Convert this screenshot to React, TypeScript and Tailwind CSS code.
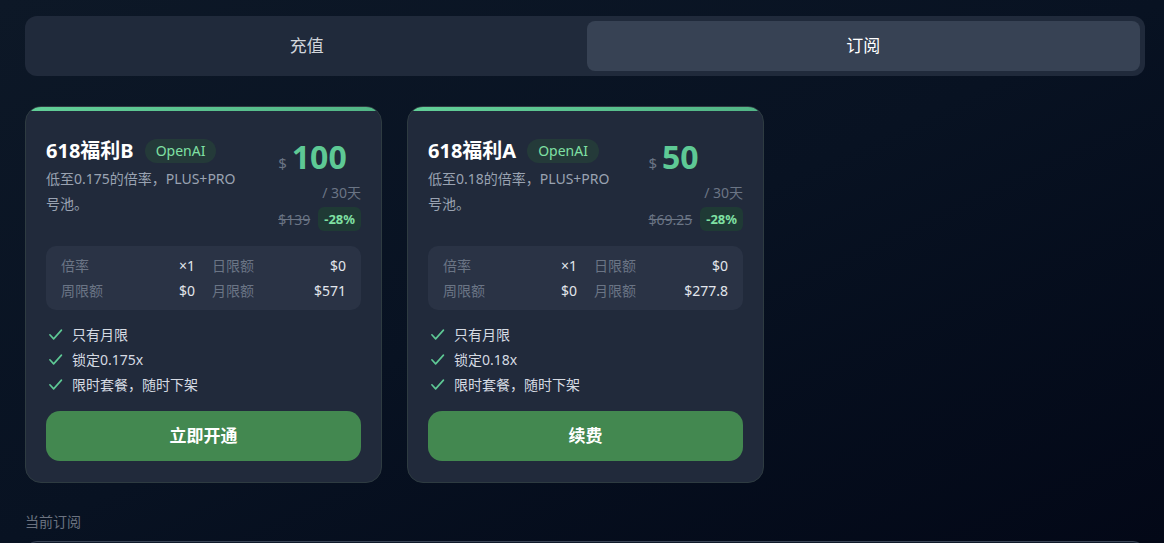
import React from "react";

const font = { fontFamily: '"Noto Sans", "Noto Sans CJK SC", sans-serif' };

function Check() {
  return (
    <svg width="15" height="15" viewBox="0 0 24 24" fill="none" stroke="#5ec995" strokeWidth="2.6" strokeLinecap="round" strokeLinejoin="round">
      <path d="M3 12.5l6 6.5L21.5 5" />
    </svg>
  );
}

type Plan = {
  title: string;
  desc: string;
  price: string;
  orig: string;
  dayLimit: string;
  weekLimit: string;
  monthLimit: string;
  feature: string;
  button: string;
};

const plans: Plan[] = [
  {
    title: "618福利B",
    desc: "低至0.175的倍率，PLUS+PRO号池。",
    price: "100",
    orig: "$139",
    dayLimit: "$0",
    weekLimit: "$0",
    monthLimit: "$571",
    feature: "锁定0.175x",
    button: "立即开通",
  },
  {
    title: "618福利A",
    desc: "低至0.18的倍率，PLUS+PRO号池。",
    price: "50",
    orig: "$69.25",
    dayLimit: "$0",
    weekLimit: "$0",
    monthLimit: "$277.8",
    feature: "锁定0.18x",
    button: "续费",
  },
];

function Card({ p }: { p: Plan }) {
  return (
    <div className="relative w-[357px] rounded-[16px] border border-[#2e3b41] bg-[#212a3b] overflow-hidden">
      <div className="h-[4px] bg-gradient-to-r from-[#62cf98] to-[#52b586]" />
      <div className="px-5 pt-[26px] pb-[21px]">
        <div className="flex gap-[18px]">
          <div className="flex-1 min-w-0">
            <div className="flex items-center gap-[11px] h-[28px]">
              <span className="text-[20px] font-bold text-white leading-[28px]">{p.title}</span>
              <span className="h-[24px] px-[11px] rounded-full bg-[#243a39] text-[#7fe0a3] text-[14px] leading-[24px]">OpenAI</span>
            </div>
            <div className="mt-[1px] max-w-[192px] text-[14px] leading-[25px] text-[#9aa3b2]">{p.desc}</div>
          </div>
          <div className="flex flex-col">
            <div className="flex items-baseline gap-[5px] h-[40px] self-start">
              <span className="text-[15px] text-[#6b7585]">$</span>
              <span className="text-[32px] font-bold text-[#5ec995] leading-[40px]">{p.price}</span>
            </div>
            <div className="self-end text-[14px] leading-[20px] mt-[6px] text-[#6b7585]">/ 30天</div>
            <div className="flex items-center gap-[8px] mt-[4px]">
              <span className="text-[14px] text-[#6b7585] line-through">{p.orig}</span>
              <span className="h-[24px] px-[6px] rounded-[6px] bg-[#1f3a35] text-[#7fe0a3] text-[13px] font-bold leading-[24px]">-28%</span>
            </div>
          </div>
        </div>
        <div className="mt-[15px] rounded-[10px] bg-[#2a3345] px-[15px] py-[7px] grid grid-cols-2 gap-x-[17px] text-[14px] leading-[25px]">
          <div className="flex justify-between"><span className="text-[#6b7585]">倍率</span><span className="text-[#e2e6ec]">×1</span></div>
          <div className="flex justify-between"><span className="text-[#6b7585]">日限额</span><span className="text-[#e2e6ec]">{p.dayLimit}</span></div>
          <div className="flex justify-between"><span className="text-[#6b7585]">周限额</span><span className="text-[#e2e6ec]">{p.weekLimit}</span></div>
          <div className="flex justify-between"><span className="text-[#6b7585]">月限额</span><span className="text-[#e2e6ec]">{p.monthLimit}</span></div>
        </div>
        <div className="mt-[12px] flex flex-col text-[14px] leading-[25px] text-[#d5dae2]">
          {["只有月限", p.feature, "限时套餐，随时下架"].map((f) => (
            <div key={f} className="flex items-center gap-[9px] pl-[2px]">
              <Check />
              <span>{f}</span>
            </div>
          ))}
        </div>
        <button className="mt-[14px] w-full h-[50px] rounded-[14px] bg-[#438850] text-white text-[17px] font-bold">{p.button}</button>
      </div>
    </div>
  );
}

export default function App() {
  return (
    <div style={font} className="w-[1164px] h-[543px] overflow-hidden bg-gradient-to-br from-[#0d1827] via-[#081222] to-[#030817] pl-[25px] pt-[16px]">
      <div className="w-[1120px]">
        <div className="h-[60px] rounded-[12px] bg-[#202a3b] p-[5px] flex gap-[3px]">
          <div className="flex-1 flex items-center justify-center text-[17px] text-[#d1d5db]">充值</div>
          <div className="flex-1 flex items-center justify-center text-[17px] text-white bg-[#374254] rounded-[8px]">订阅</div>
        </div>
        <div className="mt-[30px] flex gap-[25px]">
          {plans.map((p) => (
            <Card key={p.title} p={p} />
          ))}
        </div>
        <div className="mt-[29px] text-[14px] leading-[20px] text-[#6b7280]">当前订阅</div>
        <div className="mt-[9px] h-[60px] rounded-[12px] border border-[#3a4556] bg-[#101a2a]" />
      </div>
    </div>
  );
}
